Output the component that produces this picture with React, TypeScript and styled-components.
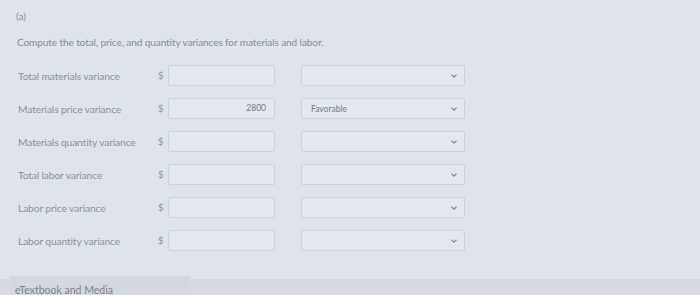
import styled, { createGlobalStyle } from 'styled-components';

const GlobalStyle = createGlobalStyle`
  html, body {
    margin: 0;
    padding: 0;
    background: #dfe4ea;
    font-family: Lato, "Open Sans", sans-serif;
    overflow: hidden;
  }
`;

type Row = {
  label: string;
  amount?: string;
  status?: string;
};

const rows: Row[] = [
  { label: 'Total materials variance' },
  { label: 'Materials price variance', amount: '2800', status: 'Favorable' },
  { label: 'Materials quantity variance' },
  { label: 'Total labor variance' },
  { label: 'Labor price variance' },
  { label: 'Labor quantity variance' },
];

const Chevron = () => (
  <svg width="8" height="6" viewBox="0 0 8 6">
    <path d="M1.5 1.8 L4 4.2 L6.5 1.8" fill="none" stroke="#858c95" strokeWidth="1.3" />
  </svg>
);

const App = () => {
  return (
    <Page>
      <GlobalStyle />
      <Part>(a)</Part>
      <Prompt>Compute the total, price, and quantity variances for materials and labor.</Prompt>
      <Table>
        {rows.map(({ label, amount, status }) => (
          <FieldRow key={label}>
            <Label>{label}</Label>
            <Dollar>$</Dollar>
            <AmountBox>{amount}</AmountBox>
            <SelectBox>
              <span>{status}</span>
              <Chevron />
            </SelectBox>
          </FieldRow>
        ))}
      </Table>
      <Footer>
        <MediaTab>eTextbook and Media</MediaTab>
      </Footer>
    </Page>
  );
};

export default App;

const Page = styled.div`
  width: 700px;
  height: 295px;
  display: flex;
  flex-direction: column;
  color: #8a9199;
`;

const Part = styled.div`
  font-size: 10px;
  padding: 9px 0 0 16px;
  height: 14px;
  line-height: 14px;
`;

const Prompt = styled.div`
  font-size: 10.05px;
  line-height: 14px;
  padding: 12px 0 0 17px;
  letter-spacing: -0.1px;
  color: #858c95;
`;

const Table = styled.div`
  display: flex;
  flex-direction: column;
  gap: 12px;
  padding: 16px 0 0 18px;
`;

const FieldRow = styled.div`
  display: flex;
  align-items: center;
  height: 21px;
`;

const Label = styled.div`
  width: 140px;
  font-size: 10.3px;
  letter-spacing: -0.15px;
  white-space: nowrap;
`;

const Dollar = styled.div`
  width: 10px;
  font-size: 9.5px;
  color: #8e959e;
`;

const AmountBox = styled.div`
  box-sizing: border-box;
  width: 107px;
  height: 21px;
  border: 1px solid #cbd2d9;
  border-radius: 2px;
  background: #e3e8ee;
  font-size: 8.5px;
  line-height: 19px;
  text-align: right;
  padding-right: 8px;
  color: #737b84;
`;

const SelectBox = styled.div`
  box-sizing: border-box;
  margin-left: 26px;
  width: 164px;
  height: 21px;
  border: 1px solid #cbd2d9;
  border-radius: 2px;
  background: #e3e8ee;
  display: flex;
  align-items: center;
  justify-content: space-between;
  padding: 0 6px 0 9px;
  font-size: 8.5px;
  color: #737b84;
`;

const Footer = styled.div`
  margin-top: auto;
  height: 16px;
  background: #d5dbe1;
  display: flex;
  align-items: flex-end;
  padding-left: 10px;
`;

const MediaTab = styled.div`
  height: 18px;
  width: 180px;
  margin-top: -3px;
  background: #d2d8de;
  font-size: 10.5px;
  line-height: 13px;
  padding: 8px 0 0 5px;
  box-sizing: border-box;
  color: #7d848d;
  align-self: flex-start;
`;
